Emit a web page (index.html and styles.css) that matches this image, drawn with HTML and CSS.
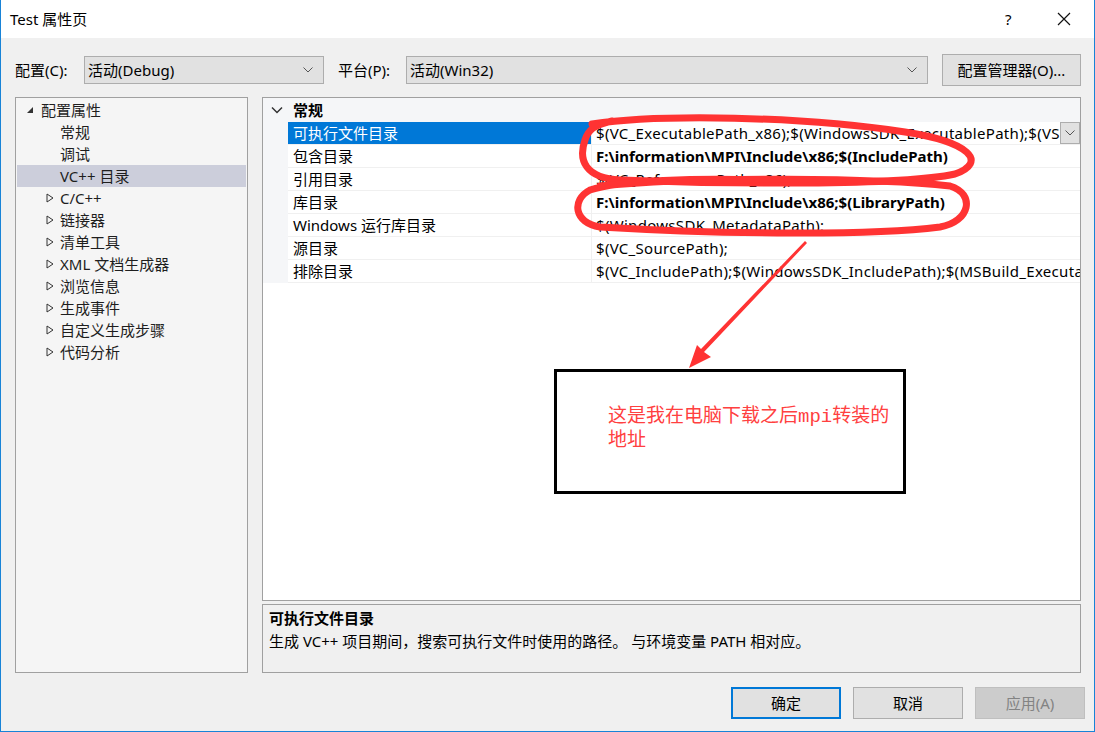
FILE: index.html
```html
<!DOCTYPE html>
<html>
<head>
<meta charset="utf-8">
<link rel="stylesheet" href="styles.css">
</head>
<body>
<div class="window">
  <div class="titlebar">
    <span class="title">Test 属性页</span>
    <span class="tb-help">?</span>
    <span class="tb-close">
      <svg width="14" height="14" viewBox="0 0 14 14"><path d="M1 1 L13 13 M13 1 L1 13" stroke="#111" stroke-width="1.2" fill="none"/></svg>
    </span>
  </div>
  <div class="client">
    <div class="toolbar">
      <span class="lbl lbl-conf">配置(C):</span>
      <div class="combo combo-conf"><span>活动(Debug)</span><svg class="chev" width="10" height="6" viewBox="0 0 10 6"><path d="M0.5 0.5 L5 5 L9.5 0.5" stroke="#555" fill="none"/></svg></div>
      <span class="lbl lbl-plat">平台(P):</span>
      <div class="combo combo-plat"><span>活动(Win32)</span><svg class="chev" width="10" height="6" viewBox="0 0 10 6"><path d="M0.5 0.5 L5 5 L9.5 0.5" stroke="#555" fill="none"/></svg></div>
      <div class="btn btn-mgr">配置管理器(O)...</div>
    </div>
    <div class="main">
      <div class="tree">
        <div class="node root"><span class="tw"><svg width="8" height="8" viewBox="0 0 8 8"><path d="M7 1 L7 7 L1 7 Z" fill="#333"/></svg></span>配置属性</div>
        <div class="node leaf">常规</div>
        <div class="node leaf">调试</div>
        <div class="node leaf sel">VC++ 目录</div>
        <div class="node"><span class="tw"><svg width="8" height="10" viewBox="0 0 8 10"><path d="M1 1 L7 5 L1 9 Z" fill="none" stroke="#333"/></svg></span>C/C++</div>
        <div class="node"><span class="tw"><svg width="8" height="10" viewBox="0 0 8 10"><path d="M1 1 L7 5 L1 9 Z" fill="none" stroke="#333"/></svg></span>链接器</div>
        <div class="node"><span class="tw"><svg width="8" height="10" viewBox="0 0 8 10"><path d="M1 1 L7 5 L1 9 Z" fill="none" stroke="#333"/></svg></span>清单工具</div>
        <div class="node"><span class="tw"><svg width="8" height="10" viewBox="0 0 8 10"><path d="M1 1 L7 5 L1 9 Z" fill="none" stroke="#333"/></svg></span>XML 文档生成器</div>
        <div class="node"><span class="tw"><svg width="8" height="10" viewBox="0 0 8 10"><path d="M1 1 L7 5 L1 9 Z" fill="none" stroke="#333"/></svg></span>浏览信息</div>
        <div class="node"><span class="tw"><svg width="8" height="10" viewBox="0 0 8 10"><path d="M1 1 L7 5 L1 9 Z" fill="none" stroke="#333"/></svg></span>生成事件</div>
        <div class="node"><span class="tw"><svg width="8" height="10" viewBox="0 0 8 10"><path d="M1 1 L7 5 L1 9 Z" fill="none" stroke="#333"/></svg></span>自定义生成步骤</div>
        <div class="node"><span class="tw"><svg width="8" height="10" viewBox="0 0 8 10"><path d="M1 1 L7 5 L1 9 Z" fill="none" stroke="#333"/></svg></span>代码分析</div>
      </div>
      <div class="right">
        <div class="grid">
          <div class="cat"><span class="cat-tw"><svg width="12" height="8" viewBox="0 0 12 8"><path d="M1 1.5 L6 6.5 L11 1.5" stroke="#333" stroke-width="1.5" fill="none"/></svg></span><span class="cat-name">常规</span></div>
          <div class="row sel"><span class="gut"></span><span class="name">可执行文件目录</span><span class="val">$(VC_ExecutablePath_x86);$(WindowsSDK_ExecutablePath);$(VS</span><span class="ddbtn"><svg width="10" height="6" viewBox="0 0 10 6"><path d="M0.5 0.5 L5 5 L9.5 0.5" stroke="#555" fill="none"/></svg></span></div>
          <div class="row"><span class="gut"></span><span class="name">包含目录</span><span class="val bold">F:\information\MPI\Include\x86;$(IncludePath)</span></div>
          <div class="row"><span class="gut"></span><span class="name">引用目录</span><span class="val">$(VC_ReferencesPath_x86);</span></div>
          <div class="row"><span class="gut"></span><span class="name">库目录</span><span class="val bold">F:\information\MPI\Include\x86;$(LibraryPath)</span></div>
          <div class="row"><span class="gut"></span><span class="name">Windows 运行库目录</span><span class="val">$(WindowsSDK_MetadataPath);</span></div>
          <div class="row"><span class="gut"></span><span class="name">源目录</span><span class="val">$(VC_SourcePath);</span></div>
          <div class="row"><span class="gut"></span><span class="name">排除目录</span><span class="val">$(VC_IncludePath);$(WindowsSDK_IncludePath);$(MSBuild_Executa</span></div>
        </div>
        <div class="desc">
          <div class="desc-title">可执行文件目录</div>
          <div class="desc-text">生成 VC++ 项目期间，搜索可执行文件时使用的路径。 与环境变量 PATH 相对应。</div>
        </div>
      </div>
    </div>
    <div class="footer">
      <div class="btn fbtn default">确定</div>
      <div class="btn fbtn">取消</div>
      <div class="btn fbtn disabled">应用(A)</div>
    </div>
  </div>

  <svg class="marks" width="1095" height="732" viewBox="0 0 1095 732">
    <path d="M592 124 C 660 114, 800 116, 905 132 C 970 142, 988 162, 955 174 C 900 186, 720 184, 620 180 C 585 178, 578 160, 585 140 C 588 130, 594 125, 612 121" fill="none" stroke="#ff3333" stroke-width="7" stroke-linecap="round"/>
    <path d="M600 186 C 700 176, 880 178, 950 186 C 976 194, 970 222, 940 227 C 860 237, 700 233, 600 227 C 574 223, 571 200, 590 190 C 620 180, 700 178, 760 180" fill="none" stroke="#ff3333" stroke-width="7" stroke-linecap="round"/>
    <polygon points="805,241 807,243 704,352 711,357 689,368 697,345 701,349" fill="#ff3333"/>
  </svg>

  <div class="note">
    <p>这是我在电脑下载之后mpi转装的地址</p>
  </div>
</div>
</body>
</html>
```
FILE: styles.css
```css
* { box-sizing: border-box; }
html, body { margin: 0; padding: 0; }
body {
  font-family: "Noto Sans", "Noto Sans CJK SC", sans-serif;
  font-size: 15px;
  color: #000;
  background: #fff;
}
.window {
  position: relative;
  width: 1095px;
  height: 732px;
  border: 1px solid #1883d7;
  border-top: none;
  overflow: hidden;
  background: #f0f0f0;
}
.titlebar {
  height: 38px;
  background: #fff;
  display: flex;
  align-items: center;
  padding-left: 9px;
  position: relative;
}
.title { font-size: 15px; line-height: 20px; }
.tb-help {
  position: absolute;
  left: 1004px;
  top: 9px;
  font-size: 15px;
}
.tb-close {
  position: absolute;
  left: 1056px;
  top: 12px;
  line-height: 0;
}
.client { padding: 0 0 0 14px; }
.toolbar {
  display: flex;
  align-items: center;
  height: 32px;
  margin-top: 16px;
}
.lbl { line-height: 20px; }
.lbl-conf { width: 69px; }
.lbl-plat { width: 68px; margin-left: 14px; }
.combo {
  height: 28px;
  border: 1px solid #adadad;
  background: #e1e1e1;
  display: flex;
  align-items: center;
  justify-content: space-between;
  padding: 0 10px 0 3px;
  line-height: 20px;
}
.combo-conf { width: 240px; }
.combo-plat { width: 522px; }
.chev { display: block; }
.btn {
  border: 1px solid #adadad;
  background: #e1e1e1;
  display: flex;
  align-items: center;
  justify-content: center;
  line-height: 20px;
}
.btn-mgr { width: 139px; height: 32px; margin-left: 14px; }
.main {
  display: flex;
  margin-top: 11px;
  height: 576px;
  gap: 14px;
}
.tree {
  width: 233px;
  height: 576px;
  border: 1px solid #a0a0a0;
  background: #f5f5f5;
  padding: 1px 1px;
}
.node {
  height: 22px;
  line-height: 22px;
  padding-left: 43px;
  position: relative;
  color: #1e1e1e;
}
.node.root { padding-left: 24px; }
.node .tw {
  position: absolute;
  left: 29px;
  top: 0;
  height: 22px;
  display: flex;
  align-items: center;
}
.node.root .tw { left: 9px; }
.node.leaf { padding-left: 43px; }
.node.sel { background: #cccedb; }
.right {
  width: 819px;
  display: flex;
  flex-direction: column;
  gap: 3px;
}
.grid {
  height: 504px;
  border: 1px solid #a0a0a0;
  background: #fff;
}
.cat {
  height: 24px;
  display: flex;
  align-items: center;
  background: #f5f6f8;
}
.cat-tw { width: 25px; display: flex; justify-content: center; padding-left: 3px; }
.cat-name { font-weight: bold; padding-left: 5px; line-height: 20px; }
.row {
  height: 23px;
  display: flex;
  align-items: center;
  position: relative;
  border-bottom: 1px solid #f0f0f0;
}
.gut {
  width: 25px;
  align-self: stretch;
  background: #f5f6f8;
  margin-bottom: -1px;
}
.name {
  width: 304px;
  align-self: stretch;
  display: flex;
  align-items: center;
  padding-left: 5px;
  border-right: 1px solid #f0f0f0;
  line-height: 20px;
}
.row.sel .name { background: #0078d7; color: #fff; }
.val {
  padding-left: 4px;
  white-space: nowrap;
  overflow: hidden;
  flex: 1;
  line-height: 20px;
  letter-spacing: 0.3px;
}
.val.bold { font-weight: bold; letter-spacing: 0; }
.ddbtn {
  width: 20px;
  height: 22px;
  border: 1px solid #adadad;
  background: #e1e1e1;
  display: flex;
  align-items: center;
  justify-content: center;
}
.desc {
  height: 69px;
  border: 1px solid #a0a0a0;
  padding: 3px 6px;
}
.desc-title { font-weight: bold; line-height: 20px; }
.desc-text { margin-top: 3px; line-height: 20px; }
.footer {
  display: flex;
  justify-content: flex-end;
  gap: 12px;
  padding-right: 9px;
  margin-top: 14px;
}
.fbtn { width: 110px; height: 32px; }
.fbtn.default { border: 2px solid #0078d7; }
.fbtn.disabled { background: #cccccc; border-color: #bfbfbf; color: #838383; }
.marks {
  position: absolute;
  left: -1px;
  top: 0;
  pointer-events: none;
}
.note {
  position: absolute;
  left: 553px;
  top: 369px;
  width: 352px;
  height: 125px;
  border: 3px solid #000;
  background: #fff;
  padding: 33px 6px 0 51px;
}
.note p {
  margin: 0;
  color: #ff4040;
  font-family: "Liberation Mono", "Noto Sans CJK SC", monospace;
  font-size: 19px;
  line-height: 24px;
}
```
